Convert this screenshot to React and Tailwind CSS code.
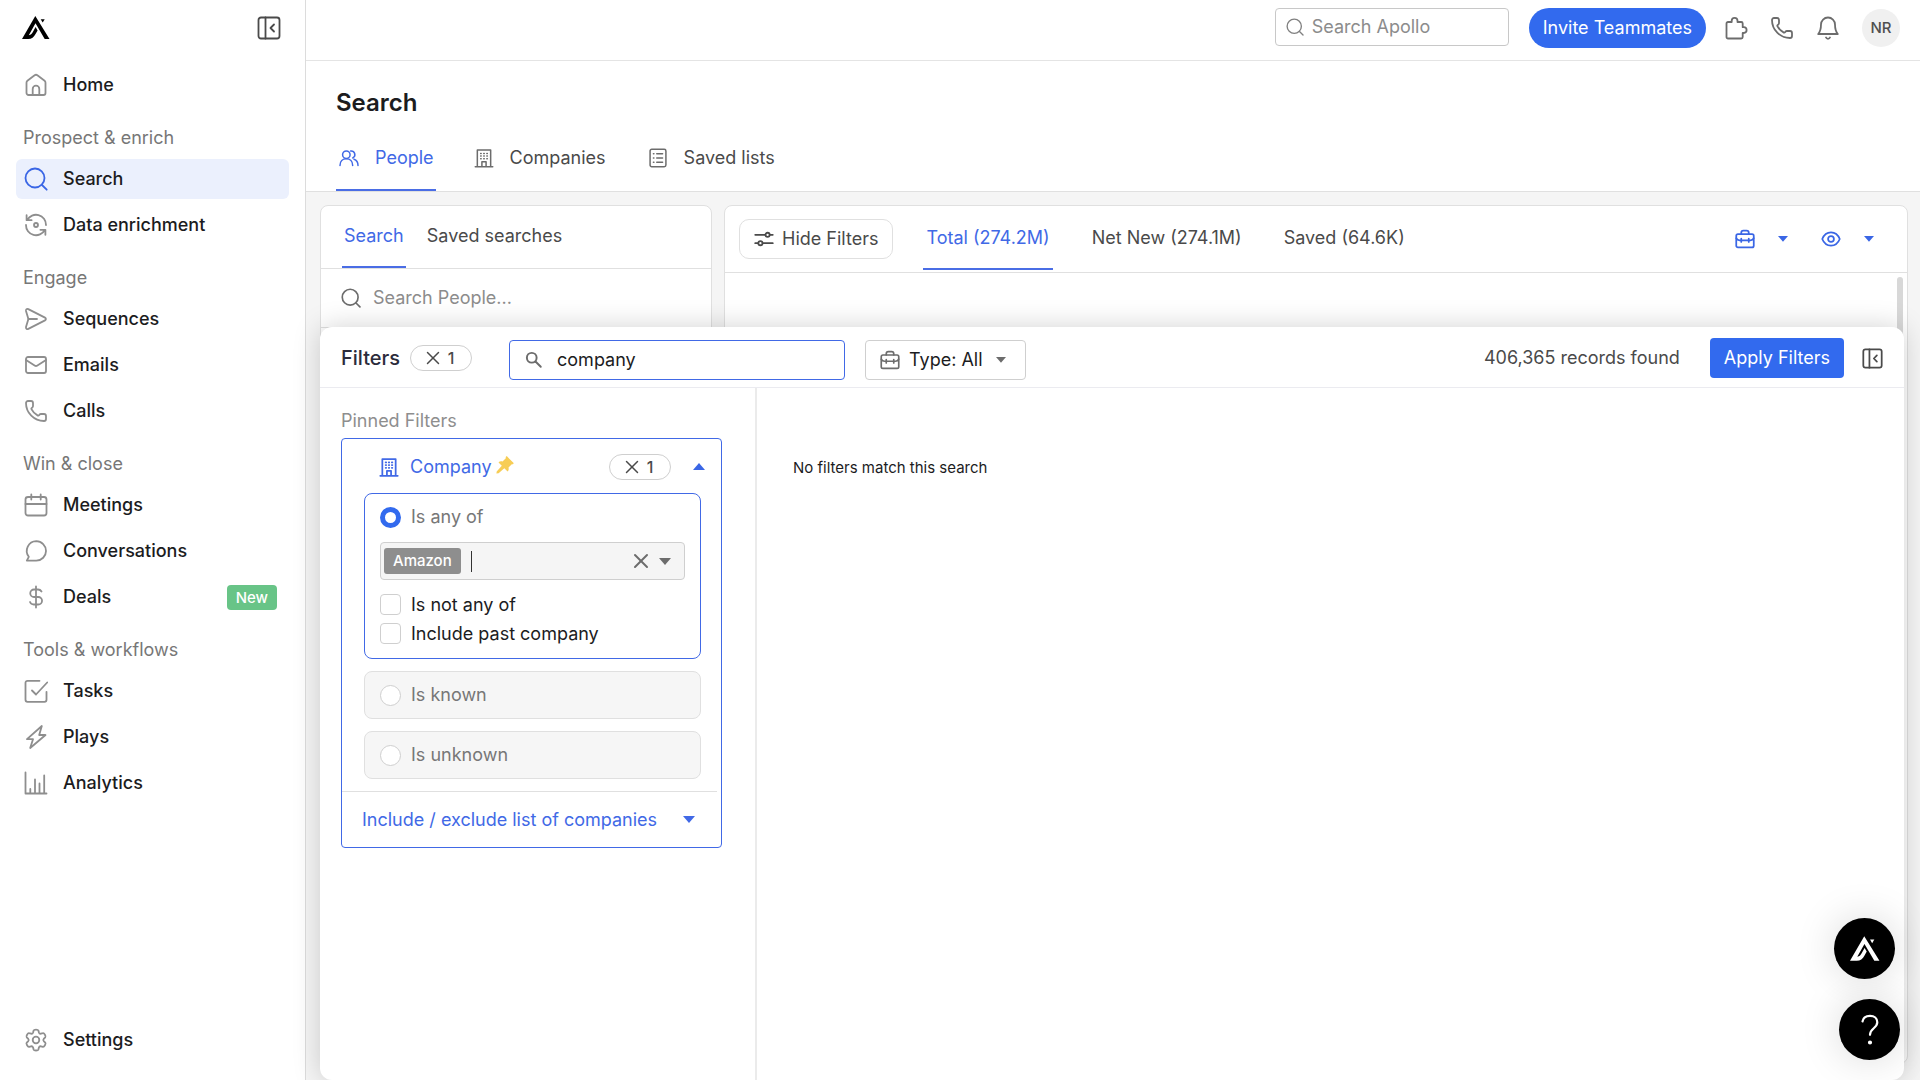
import { useState } from "react";
import { Mail, Phone, X } from "lucide-react";

function Icon({ children, className = "size-6", width = 1.8 }) {
  return (
    <svg
      viewBox="0 0 24 24"
      fill="none"
      stroke="currentColor"
      strokeWidth={width}
      strokeLinecap="round"
      strokeLinejoin="round"
      aria-hidden="true"
      className={`shrink-0 ${className}`}
    >
      {children}
    </svg>
  );
}

const HomeIcon = (props) => (
  <Icon {...props}>
    <path d="M2.5 9.8c0-.8.3-1.500.9-2L10.600 2.300a2.200 2.200 0 0 1 2.800 0L20.600 7.800c.6.500.9 1.200.9 2V20a2 2 0 0 1-2 2h-15a2 2 0 0 1-2-2Z" />
    <path d="M8.700 22v-6a3.300 3.300 0 0 1 6.600 0v6" />
  </Icon>
);

const SearchIcon = (props) => (
  <Icon {...props}>
    <circle cx="11" cy="11" r="9.500" />
    <path d="m18 18 4.700 4.700" />
  </Icon>
);

const EnrichIcon = (props) => (
  <Icon {...props}>
    <path d="M2.600 2.200v5h5M3.200 7a10 10 0 0 1 18.800 5" />
    <path d="M21.400 21.800v-5h-5M20.800 17A10 10 0 0 1 2 12" />
    <circle cx="12" cy="12" r="2" />
  </Icon>
);

const SendIcon = (props) => (
  <Icon {...props}>
    <path d="M2 4c-.3-1.500.9-2.500 2.300-1.900L21 10.600c1.200.6 1.200 2.200 0 2.800L4.300 21.900C2.900 22.500 1.700 21.500 2 20l2.400-8Z" />
    <path d="M4.400 12H13" />
  </Icon>
);

const CalendarIcon = (props) => (
  <Icon {...props}>
    <rect x="1.500" y="4" width="21" height="18.500" rx="2.500" />
    <path d="M1.500 11h21M7.300 1.500v5M16.700 1.500v5" />
  </Icon>
);

const ChatIcon = (props) => (
  <Icon {...props}>
    <path d="M12.300 2.200a9.700 9.700 0 1 1 0 19.400H2.800l2-3.800A9.700 9.700 0 0 1 12.300 2.200Z" />
  </Icon>
);

const DollarIcon = (props) => (
  <Icon {...props}>
    <path d="M12 1.500v21M17.500 6.500a4 4 0 0 0-3.500-2h-4a3.700 3.700 0 0 0 0 7.500h4.300a3.700 3.700 0 0 1 0 7.500H9.700a4 4 0 0 1-3.700-2.500" />
  </Icon>
);

const TaskIcon = (props) => (
  <Icon {...props}>
    <path d="M15.500 1.800h-12a2 2 0 0 0-2 2v17a2 2 0 0 0 2 2h17a2 2 0 0 0 2-2v-8" />
    <path d="m8 11.500 4 4L23.200 3.500" />
  </Icon>
);

const BoltIcon = (props) => (
  <Icon {...props}>
    <path d="M17.800 1 3 14.200h6L6.200 23 21.500 10h-6.300Z" />
  </Icon>
);

const ChartIcon = (props) => (
  <Icon {...props}>
    <path d="M1.500 1.500v21h21M6.300 22v-4M11 22V8.500M15.500 22v-9.500M20.200 22V4.500" />
  </Icon>
);

const GearIcon = (props) => (
  <Icon {...props}>
    <path d="M9.600 2.500c.4-1.300 4.400-1.300 4.800 0l.5 2c.3.900 1.200 1.400 2.100 1.200l1.900-.5c1.300-.4 3.300 3.100 2.400 4.100l-1.400 1.400a1.900 1.900 0 0 0 0 2.600l1.400 1.400c.9 1-1.100 4.500-2.400 4.100l-1.900-.5c-.9-.2-1.800.3-2.100 1.200l-.5 2c-.4 1.300-4.400 1.300-4.800 0l-.5-2A1.900 1.900 0 0 0 7 18.300l-1.900.5c-1.300.4-3.300-3.100-2.400-4.100l1.400-1.400a1.900 1.900 0 0 0 0-2.600L2.700 9.300c-.9-1 1.100-4.500 2.400-4.100L7 5.700c.9.200 1.800-.3 2.100-1.200Z" />
    <circle cx="12" cy="12" r="3.300" />
  </Icon>
);

const CollapseIcon = (props) => (
  <Icon {...props}>
    <rect x="1.500" y="1.500" width="21" height="21" rx="2.500" />
    <path d="M8.500 1.500v21M17 8.500 13.500 12l3.500 3.500" />
  </Icon>
);

const PeopleIcon = (props) => (
  <Icon {...props}>
    <circle cx="8.800" cy="8" r="4.500" />
    <path d="M1.200 21c0-5 3.200-8 7.600-8s7.600 3 7.600 8" />
    <path d="M14 3.500a4.500 4.500 0 0 1 2.500 8.500M18 13.500c3 1 4.800 3.600 4.800 7.500" />
  </Icon>
);

const BuildingIcon = (props) => (
  <Icon {...props}>
    <path d="M1.500 22.500h21M4 22.500v-20h16v20M9.500 22.500v-6h5v6" />
    <path d="M8 6.500h.6M11.700 6.500h.6M15.400 6.500h.6M8 9.700h.6M11.700 9.700h.6M15.400 9.700h.6M8 13h.6M11.700 13h.6M15.400 13h.6" />
  </Icon>
);

const ListIcon = (props) => (
  <Icon {...props}>
    <rect x="2.500" y="1.500" width="19" height="21" rx="2" />
    <path d="M6.500 7h.6M6.500 12h.6M6.500 17h.6M10.500 7h7M10.500 12h7M10.500 17h7" />
  </Icon>
);

const SlidersIcon = (props) => (
  <Icon {...props}>
    <path d="M1.500 7h12M19 7h3.500M1.500 17H5M10.500 17h12" />
    <circle cx="16.300" cy="7" r="2.500" />
    <circle cx="7.700" cy="17" r="2.500" />
  </Icon>
);

const BriefcaseIcon = (props) => (
  <Icon {...props}>
    <rect x="1.500" y="6" width="21" height="16" rx="2" />
    <path d="M7.500 6V4.500a2.500 2.500 0 0 1 2.500-2.500h4a2.500 2.500 0 0 1 2.500 2.500V6M1.500 11c1 2 2.500 2.500 4 2.500h13c1.500 0 3-.5 4-2.500M7.500 11.500v4M16.500 11.500v4" />
  </Icon>
);

const EyeIcon = (props) => (
  <Icon {...props}>
    <path d="M1.500 12C3.500 7 7.500 4 12 4s8.500 3 10.500 8c-2 5-6 8-10.500 8S3.500 17 1.500 12Z" />
    <circle cx="12" cy="12" r="3.500" />
  </Icon>
);

const PuzzleIcon = (props) => (
  <Icon {...props}>
    <path d="M2.500 7.500a1.500 1.500 0 0 1 1.500-1.500h3.700V4.700a2.900 2.900 0 0 1 5.800 0V6h3.700a1.500 1.500 0 0 1 1.500 1.500v3.700h1a2.900 2.900 0 0 1 0 5.800h-1v4a1.500 1.500 0 0 1-1.500 1.500H4A1.500 1.500 0 0 1 2.500 21Z" />
  </Icon>
);

const BellIcon = (props) => (
  <Icon {...props}>
    <path d="M12 1.500a7 7 0 0 0-7 7c0 5.500-1.200 7.600-2.800 9.500h19.600C20.200 16.100 19 14 19 8.500a7 7 0 0 0-7-7ZM10 21.500a2.200 2.200 0 0 0 4 0" />
  </Icon>
);

function Caret({ up = false, className = "w-3" }) {
  return (
    <svg viewBox="0 0 12 7" fill="currentColor" aria-hidden="true" className={`shrink-0 ${className}`}>
      <path d={up ? "M0 7 6 0l6 7Z" : "M0 0h12L6 7Z"} />
    </svg>
  );
}

function Pushpin() {
  return (
    <svg viewBox="0 0 18 18" fill="#f7cd55" aria-hidden="true" className="mb-1 size-[18px]">
      <path d="M11.200.6 17.400 6.800c.7.700-.3 1.800-1.600 1.400l-3.300 3.300c.5 1.900 0 3.200-.9 4L8.300 12.200 2.600 17.300.4 17.600.7 15.400 5.800 9.700 2.500 6.400c.8-.9 2.100-1.400 4-.9L9.800 2.200C9.400.9 10.500-.1 11.200.6Z" />
    </svg>
  );
}

function Logo({ className }) {
  return (
    <svg viewBox="0 0 28 23" fill="currentColor" aria-hidden="true" className={className}>
      <path d="M0 23 13.300 0 27.500 23H22.700L13.500 7.300 6.800 19.200c2.300-.3 3.200-1.800 4.200-3.500l2.600-4.600 2 3.300-1.900 3.300C11.800 21 9.700 23 6.200 23Z" />
      <path d="M18.700 3.200h4l-2 3.300Z" />
    </svg>
  );
}

const navGroups = [
  { title: null, items: [{ name: "Home", icon: HomeIcon }] },
  {
    title: "Prospect & enrich",
    items: [
      { name: "Search", icon: SearchIcon, active: true },
      { name: "Data enrichment", icon: EnrichIcon },
    ],
  },
  {
    title: "Engage",
    items: [
      { name: "Sequences", icon: SendIcon },
      { name: "Emails", icon: (props) => <Mail strokeWidth={1.8} {...props} /> },
      { name: "Calls", icon: (props) => <Phone strokeWidth={1.8} {...props} /> },
    ],
  },
  {
    title: "Win & close",
    items: [
      { name: "Meetings", icon: CalendarIcon },
      { name: "Conversations", icon: ChatIcon },
      { name: "Deals", icon: DollarIcon, badge: "New" },
    ],
  },
  {
    title: "Tools & workflows",
    items: [
      { name: "Tasks", icon: TaskIcon },
      { name: "Plays", icon: BoltIcon },
      { name: "Analytics", icon: ChartIcon },
    ],
  },
];

function NavItem({ item }) {
  const ItemIcon = item.icon;
  return (
    <a
      href="#"
      className={`flex h-10 items-center gap-[15px] rounded-md px-2 text-lg font-medium text-[#1c1c1e] ${
        item.active ? "bg-[#ebf0fd]" : ""
      }`}
    >
      <ItemIcon className={item.active ? "size-6 text-[#3a66e5]" : "size-6 text-[#8e8e8e]"} />
      <span className="flex-1">{item.name}</span>
      {item.badge && (
        <span className="mr-1 rounded bg-[#68c487] px-[9px] text-[15px] leading-[25px] font-medium text-white">
          {item.badge}
        </span>
      )}
    </a>
  );
}

function Sidebar() {
  return (
    <aside className="flex w-[306px] shrink-0 flex-col border-r border-[#dcdcdc] bg-white px-4">
      <div className="flex h-[65px] items-start justify-between pt-4 pr-2 pl-1.5">
        <Logo className="h-[23px] w-7 text-black" />
        <button type="button" aria-label="Collapse sidebar" className="text-[#4a4a4a]">
          <CollapseIcon />
        </button>
      </div>
      <nav className="flex-1">
        {navGroups.map((group, i) => (
          <div key={i}>
            {group.title && (
              <h2 className="flex h-[54px] items-end px-[7px] pb-[7px] text-lg font-normal text-[#777]">{group.title}</h2>
            )}
            <div className="flex flex-col gap-1.5">
              {group.items.map((item) => (
                <NavItem key={item.name} item={item} />
              ))}
            </div>
          </div>
        ))}
      </nav>
      <div className="pb-5">
        <NavItem item={{ name: "Settings", icon: GearIcon }} />
      </div>
    </aside>
  );
}

function Header() {
  return (
    <header className="flex h-[61px] shrink-0 items-start justify-end border-b border-[#e4e4e4] bg-white pt-2 pr-5">
      <label className="mr-5 flex h-[38px] w-[234px] items-center gap-2 rounded border border-[#c8c8c8] px-2.5">
        <SearchIcon className="size-[18px] text-[#808080]" />
        <input
          type="text"
          aria-label="Search Apollo"
          placeholder="Search Apollo"
          className="w-full min-w-0 text-lg outline-none placeholder:text-[#8c8c8c]"
        />
      </label>
      <button type="button" className="mr-[18px] h-10 rounded-full bg-[#326aee] px-3.5 text-lg text-white">
        Invite Teammates
      </button>
      <div className="flex h-10 items-center gap-[22px] text-[#6c6c6c]">
        <button type="button" aria-label="Extensions">
          <PuzzleIcon />
        </button>
        <button type="button" aria-label="Calls">
          <Phone className="size-6" strokeWidth={1.8} />
        </button>
        <button type="button" aria-label="Notifications">
          <BellIcon />
        </button>
        <button type="button" className="size-[38px] rounded-full bg-[#f0f0f0] text-[15px] font-medium text-[#4f4f4f]">
          NR
        </button>
      </div>
    </header>
  );
}

function PageTabs() {
  return (
    <div className="shrink-0 border-b border-[#e0e0e0] bg-white px-[30px] pt-6">
      <h1 className="text-2xl leading-9 font-semibold text-[#1c1c1e]">Search</h1>
      <nav className="mt-[9px] flex gap-[34px] text-lg text-[#4a4a4a]">
        <a href="#" className="flex h-[61px] items-center gap-4 border-b-2 border-[#4a6de5] pr-0.5 pl-[3px] pb-1 text-[#4169e6]">
          <PeopleIcon className="size-5" />
          People
        </a>
        <a href="#" className="flex h-[61px] items-center gap-4 px-1 pb-1.5">
          <BuildingIcon className="size-5 text-[#6c6c6c]" />
          Companies
        </a>
        <a href="#" className="flex h-[61px] items-center gap-4 px-1 pb-1.5">
          <ListIcon className="size-5 text-[#6c6c6c]" />
          Saved lists
        </a>
      </nav>
    </div>
  );
}

function ClearPill() {
  return (
    <button
      type="button"
      aria-label="Clear 1 filter"
      className="flex h-[26px] w-[62px] items-center justify-center gap-1 rounded-full border border-[#cfcfcf] bg-white pr-1.5 text-base font-medium text-[#4a4a4a]"
    >
      <X className="size-[22px]" strokeWidth={1.6} />1
    </button>
  );
}

function SearchCard() {
  return (
    <section className="w-[392px] shrink-0 rounded-lg border border-[#e0e0e0] bg-white">
      <div className="flex gap-[19px] border-b border-[#e0e0e0] px-[21px] text-lg text-[#4a4a4a]">
        <a href="#" className="flex h-[62px] items-center border-b-2 border-[#4a6de5] px-0.5 text-[#4169e6]">
          Search
        </a>
        <a href="#" className="flex h-[62px] items-center px-0.5 pb-0.5">
          Saved searches
        </a>
      </div>
      <label className="flex h-[59px] items-center gap-3 border-b border-[#e0e0e0] px-5">
        <SearchIcon className="size-5 text-[#6c6c6c]" width={2} />
        <input
          type="text"
          aria-label="Search people"
          placeholder="Search People..."
          className="w-full min-w-0 text-lg outline-none placeholder:text-[#8c8c8c]"
        />
      </label>
    </section>
  );
}

function ResultsCard() {
  return (
    <section className="min-w-0 flex-1 rounded-lg border border-[#e0e0e0] bg-white">
      <div className="flex h-[67px] items-center border-b border-[#e0e0e0] pr-[33px] pl-3.5 text-lg text-[#4a4a4a]">
        <button type="button" className="mr-[30px] flex h-10 items-center gap-2 rounded-[10px] border border-[#e0e0e0] px-3.5">
          <SlidersIcon className="size-5" width={2.2} />
          Hide Filters
        </button>
        <div className="flex flex-1 gap-9">
          <a href="#" className="flex h-[62px] items-center border-b-2 border-[#4a6de5] px-[3px] text-[#4169e6]">
            Total (274.2M)
          </a>
          <a href="#" className="flex h-[62px] items-center px-[3px] pb-0.5">
            Net New (274.1M)
          </a>
          <a href="#" className="flex h-[62px] items-center px-[3px] pb-0.5">
            Saved (64.6K)
          </a>
        </div>
        <div className="flex gap-[33px] text-[#3a66e5]">
          <button type="button" aria-label="Workspace" className="flex items-center gap-[23px]">
            <BriefcaseIcon className="size-5" width={2.1} />
            <Caret className="w-2.5" />
          </button>
          <button type="button" aria-label="View options" className="flex items-center gap-[23px]">
            <EyeIcon className="size-5" width={2.1} />
            <Caret className="w-2.5" />
          </button>
        </div>
      </div>
      <div className="mt-1 mr-1 ml-auto h-56 w-1.5 rounded-full bg-[#d8d8d8]" />
    </section>
  );
}

const radioClass =
  "size-[21px] shrink-0 appearance-none rounded-full border border-[#cfcfcf] bg-white checked:border-[5px] checked:border-[#326aee]";
const checkboxClass =
  "size-[21px] shrink-0 appearance-none rounded-sm border border-[#cfcfcf] bg-white checked:bg-[#326aee]";

function CompanyFilter() {
  const [mode, setMode] = useState("any");

  return (
    <div className="mt-1 rounded border border-[#4169e6] text-lg">
      <div className="flex h-[54px] items-center pt-px pr-4 pl-[37px]">
        <BuildingIcon className="size-5 text-[#4169e6]" width={2.1} />
        <h3 className="mr-1 ml-[11px] text-[#4169e6]">Company</h3>
        <Pushpin />
        <div className="ml-auto">
          <ClearPill />
        </div>
        <button type="button" aria-label="Collapse company filter" className="ml-[22px] text-[#3a66e5]">
          <Caret up />
        </button>
      </div>

      <div className="flex flex-col gap-3 pr-5 pl-[22px]">
        <div className="rounded-lg border border-[#4169e6] px-[15px] pt-2 pb-2.5">
          <label className="flex h-[30px] items-center gap-2.5 text-[#777]">
            <input
              type="radio"
              name="company-mode"
              checked={mode === "any"}
              onChange={() => setMode("any")}
              className={radioClass}
            />
            Is any of
          </label>
          <div className="mt-2.5 mb-2.5 flex h-[38px] items-center rounded border border-[#cfcfcf] bg-[#f5f5f5] pr-[13px] pl-[3px]">
            <span className="rounded-[3px] bg-[#8e8e8e] px-[9px] text-[15px] leading-[26px] font-medium text-white">Amazon</span>
            <span className="ml-2.5 h-[21px] w-px shrink-0 bg-[#333]" />
            <input type="text" aria-label="Companies" className="w-full min-w-0 outline-none" />
            <button type="button" aria-label="Clear companies" className="text-[#6c6c6c]">
              <X className="size-6" strokeWidth={2} />
            </button>
            <button type="button" aria-label="Show companies" className="ml-1.5 text-[#6c6c6c]">
              <Caret />
            </button>
          </div>
          <label className="flex h-[29px] items-center gap-2.5 text-[#1c1c1e]">
            <input type="checkbox" className={checkboxClass} />
            Is not any of
          </label>
          <label className="flex h-[29px] items-center gap-2.5 text-[#1c1c1e]">
            <input type="checkbox" className={checkboxClass} />
            Include past company
          </label>
        </div>

        <label className="flex h-12 items-center gap-2.5 rounded-lg border border-[#e0e0e0] bg-[#f6f6f6] px-[15px] text-[#777]">
          <input
            type="radio"
            name="company-mode"
            checked={mode === "known"}
            onChange={() => setMode("known")}
            className={radioClass}
          />
          Is known
        </label>
        <label className="flex h-12 items-center gap-2.5 rounded-lg border border-[#e0e0e0] bg-[#f6f6f6] px-[15px] text-[#777]">
          <input
            type="radio"
            name="company-mode"
            checked={mode === "unknown"}
            onChange={() => setMode("unknown")}
            className={radioClass}
          />
          Is unknown
        </label>
      </div>

      <div className="mt-3 mr-1 border-t border-[#e0e0e0]">
        <button type="button" className="flex h-[55px] w-full items-center justify-between pr-[22px] pl-5 text-[#4169e6]">
          Include / exclude list of companies
          <Caret />
        </button>
      </div>
    </div>
  );
}

function FiltersDrawer() {
  const [query, setQuery] = useState("company");

  return (
    <section className="absolute top-[135px] right-4 bottom-0 left-3.5 flex flex-col rounded-xl bg-white shadow-[0_0_28px_rgba(0,0,0,0.18)]">
      <div className="flex h-[61px] items-center border-b border-[#ebebf0] px-[21px] pt-0.5 text-lg">
        <h2 className="mr-2.5 text-xl font-medium text-[#2b2b3b]">Filters</h2>
        <ClearPill />
        <label className="mt-1 mr-5 ml-[37px] flex h-10 w-[336px] items-center gap-3.5 rounded border border-[#4169e6] px-[15px]">
          <Icon className="size-[18px] text-[#6c6c6c]" width={2.6}>
            <circle cx="9" cy="9" r="6.500" />
            <path d="m14 14 7 7" />
          </Icon>
          <input
            type="text"
            aria-label="Search filters"
            value={query}
            onChange={(e) => setQuery(e.target.value)}
            className="w-full min-w-0 text-[#1c1c1e] outline-none"
          />
        </label>
        <div className="relative mt-1">
          <BriefcaseIcon className="pointer-events-none absolute top-2.5 left-[15px] size-5 text-[#6c6c6c]" width={2} />
          <select
            aria-label="Filter type"
            className="h-10 w-[161px] appearance-none rounded border border-[#cfcfcf] bg-white pl-[43px] text-[#1c1c1e]"
          >
            <option>Type: All</option>
            <option>Type: Person</option>
          </select>
          <Caret className="pointer-events-none absolute top-[17px] right-5 w-2.5 text-[#6c6c6c]" />
        </div>
        <p className="mr-[30px] ml-auto text-[#4a4a4a]">406,365 records found</p>
        <button type="button" className="mr-[18px] h-10 rounded bg-[#326aee] px-3.5 text-white">
          Apply Filters
        </button>
        <button type="button" aria-label="Collapse filters" className="text-[#4a4a4a]">
          <CollapseIcon className="size-[21px]" width={2} />
        </button>
      </div>
      <div className="flex flex-1">
        <div className="w-[437px] shrink-0 border-r-2 border-[#ebebeb] pt-5 pr-[33px] pl-[21px]">
          <h3 className="text-lg leading-[26px] text-[#8e8e8e]">Pinned Filters</h3>
          <CompanyFilter />
        </div>
        <p className="flex-1 px-9 pt-[68px] text-[15px] leading-6 text-[#1c1c1e]">No filters match this search</p>
      </div>
    </section>
  );
}

function FloatingButtons() {
  return (
    <div className="fixed right-5 bottom-5 flex flex-col items-end gap-5">
      <button
        type="button"
        aria-label="Apollo assistant"
        className="mr-[5px] flex size-[61px] items-center justify-center rounded-full bg-black text-white shadow-[0_0_40px_rgba(0,0,0,0.15)]"
      >
        <Logo className="h-[25px] w-[30px]" />
      </button>
      <button
        type="button"
        aria-label="Help"
        className="flex size-[61px] items-center justify-center rounded-full bg-black text-white shadow-[0_0_40px_rgba(0,0,0,0.15)]"
      >
        <svg viewBox="0 0 20 32" fill="none" stroke="currentColor" strokeWidth="2.2" strokeLinecap="round" className="h-8 w-5">
          <path d="M2.500 7.500C3 3.800 6 1.800 10 1.800c4.300 0 7.300 2.700 7.300 6.500 0 6-7.300 6-7.300 12.500" />
          <circle cx="10" cy="28.500" r="1" fill="currentColor" />
        </svg>
      </button>
    </div>
  );
}

export default function App() {
  return (
    <div className="flex min-h-screen bg-[#f5f5f5] font-['Inter',sans-serif] text-lg">
      <Sidebar />
      <main className="flex min-w-0 flex-1 flex-col">
        <Header />
        <PageTabs />
        <div className="relative flex flex-1 gap-3 pt-[13px] pr-3 pb-4 pl-3.5">
          <SearchCard />
          <ResultsCard />
          <FiltersDrawer />
        </div>
      </main>
      <FloatingButtons />
    </div>
  );
}
